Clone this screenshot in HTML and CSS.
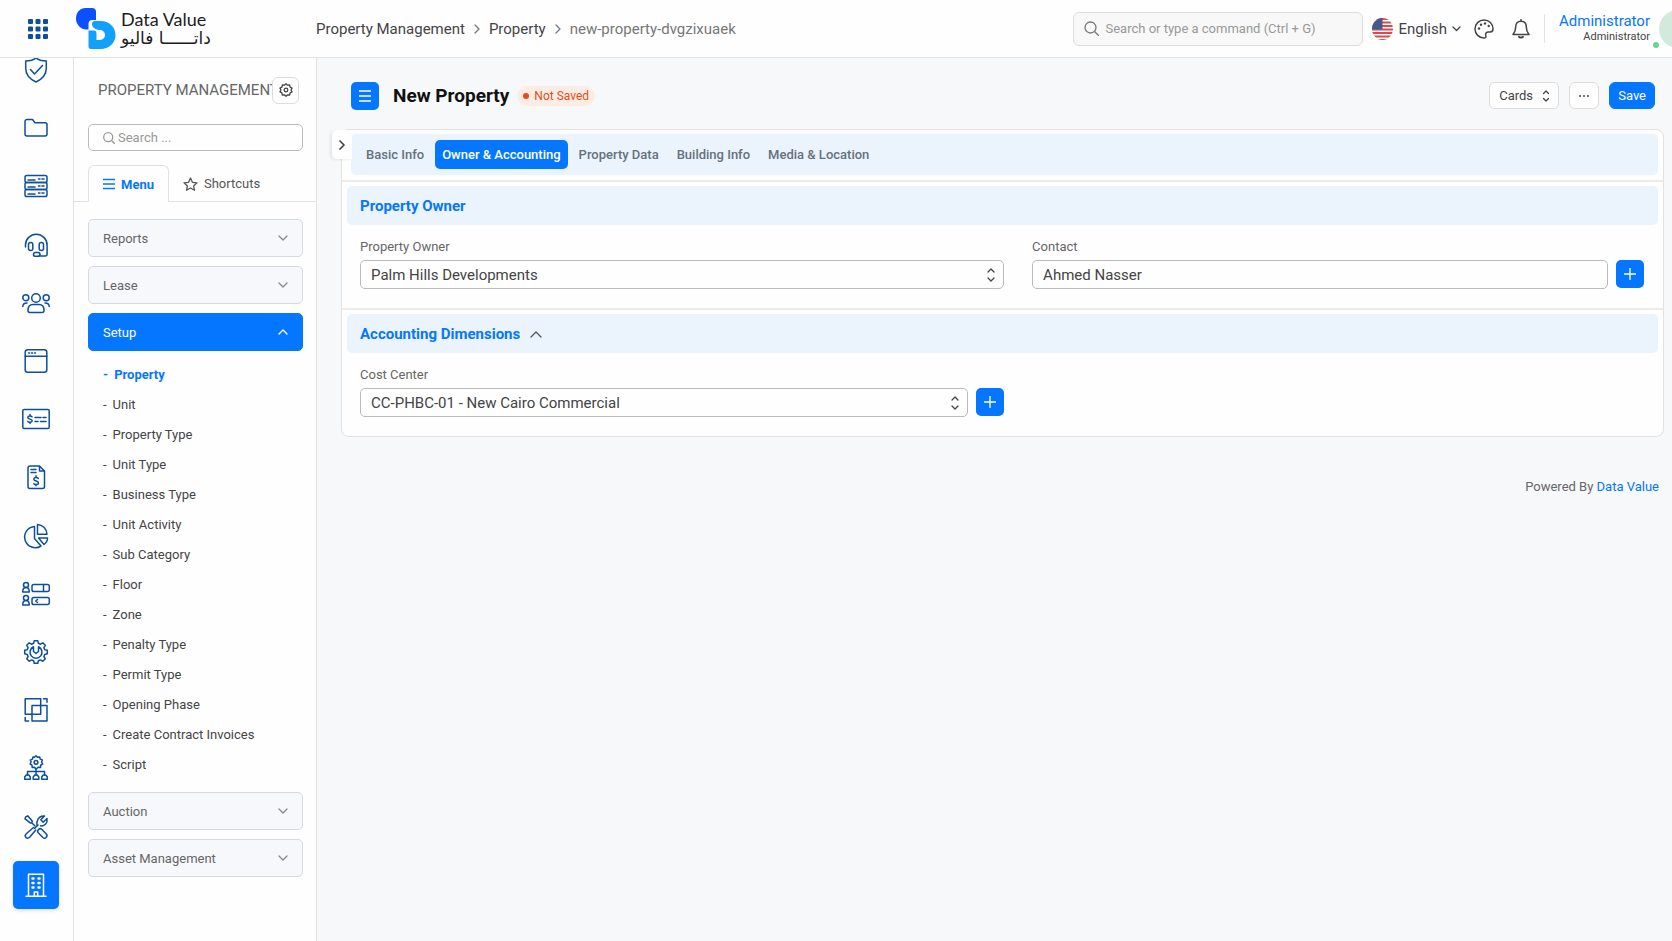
FILE: index.html
```html
<!DOCTYPE html>
<html lang="en">
<head>
  <meta charset="UTF-8" />
  <meta name="viewport" content="width=device-width, initial-scale=1" />
  <title>New Property</title>
  <link rel="stylesheet" href="styles.css">
</head>
<body>
  <header class="topbar">
    <button class="apps-btn" aria-label="Apps">
      <svg width="20" height="20" viewBox="0 0 20 20">
        <rect width="5" height="5" rx="1"/><rect x="7.5" width="5" height="5" rx="1"/><rect x="15" width="5" height="5" rx="1"/>
        <rect y="7.5" width="5" height="5" rx="1"/><rect x="7.5" y="7.5" width="5" height="5" rx="1"/><rect x="15" y="7.5" width="5" height="5" rx="1"/>
        <rect y="15" width="5" height="5" rx="1"/><rect x="7.5" y="15" width="5" height="5" rx="1"/><rect x="15" y="15" width="5" height="5" rx="1"/>
      </svg>
    </button>

    <a class="brand" href="#" aria-label="Data Value">
      <svg width="40" height="42" viewBox="0 0 40 42">
        <path d="M9.500 0H16a4 4 0 0 1 4 4v8h-3.500a4 4 0 0 0-4 4v5.500H10.500C4.500 21.500 0 16.500 0 10.500 0 4.500 4 0 9.500 0z" fill="#0b50ff"/>
        <path d="M21.500 13h3C33 13 39.500 19 39.500 27s-6.500 14-15 14H15a2.500 2.500 0 0 1-2.500-2.500V22.500h5a3 3 0 0 1 3 3V32H24a5 5 0 0 0 0-10c-4 0-8-2.500-8-6a3 3 0 0 1 3-3z" fill="#12a0fb"/>
      </svg>
      <span class="brand-text">
        <span class="brand-en">Data Value</span>
        <span class="brand-ar" lang="ar" dir="rtl">داتــــــا فاليو</span>
      </span>
    </a>

    <nav class="breadcrumb" aria-label="Breadcrumb">
      <a href="#">Property Management</a>
      <svg width="6" height="10" viewBox="0 0 6 10"><path d="M1 1l4 4-4 4"/></svg>
      <a href="#">Property</a>
      <svg width="6" height="10" viewBox="0 0 6 10"><path d="M1 1l4 4-4 4"/></svg>
      <span>new-property-dvgzixuaek</span>
    </nav>

    <div class="topbar-right">
      <label class="global-search">
        <svg width="15" height="15" viewBox="0 0 15 15"><circle cx="6.500" cy="6.500" r="5.500"/><path d="M10.500 10.500l4 4"/></svg>
        <input type="text" aria-label="Search" placeholder="Search or type a command (Ctrl + G)">
      </label>

      <button class="lang-btn">
        <svg class="flag" width="21" height="22" viewBox="0 0 21 22">
          <defs><clipPath id="flagClip"><ellipse cx="10.500" cy="11" rx="10.500" ry="11"/></clipPath></defs>
          <g clip-path="url(#flagClip)">
            <rect width="21" height="22" fill="#fff"/>
            <path class="stripes" d="M0 1h21M0 4.500h21M0 8h21M0 11.500h21M0 15h21M0 18.500h21M0 22h21"/>
            <rect width="10.500" height="11.500" fill="#45598b"/>
          </g>
        </svg>
        English
        <svg class="caret" width="9" height="6" viewBox="0 0 9 6"><path d="M1 1l3.500 3.500L8 1"/></svg>
      </button>

      <button class="icon-btn" aria-label="Theme">
        <svg width="20" height="20" viewBox="0 0 20 20">
          <path d="M10 1a9 9 0 0 0 0 18c1.600 0 2.200-1 1.800-2.300-.6-2.200.4-3.700 2.600-3.700h1.800c1.800 0 2.800-1.300 2.800-3.200C19 4.800 15 1 10 1z"/>
          <g class="dots"><circle cx="5" cy="9.500" r="1.200"/><circle cx="7" cy="5.800" r="1.200"/><circle cx="11" cy="4.500" r="1.200"/><circle cx="14.700" cy="7" r="1.200"/></g>
        </svg>
      </button>
      <button class="icon-btn" aria-label="Notifications">
        <svg width="18" height="20" viewBox="0 0 18 20">
          <path d="M9 2.200c-3.400 0-5.300 2.500-5.300 5.800 0 4-1.200 5.600-2.700 7.500h16c-1.500-1.900-2.700-3.500-2.700-7.500 0-3.300-1.900-5.800-5.300-5.800zM9 2.200V.6"/>
          <path d="M7 17.800c.5 1 3.500 1 4 0" stroke-width="2"/>
        </svg>
      </button>

      <div class="user">
        <div class="user-text">
          <a href="#">Administrator</a>
          <span>Administrator</span>
        </div>
        <div class="avatar"><span class="status"></span></div>
      </div>
    </div>
  </header>

  <div class="layout">
    <nav class="rail" aria-label="Modules">
      <div class="rail-list">
        <a href="#" aria-label="Security">
          <svg width="28" height="28" viewBox="0 0 28 28"><path d="M14 2C11 4.500 7 5 3.700 5v7c0 6.500 4.500 11.300 10.300 14 5.800-2.700 10.300-7.500 10.300-14V5C21 5 17 4.500 14 2z"/><path d="M8.500 13.500l4 4.500 8-8.500"/></svg>
        </a>
        <a href="#" aria-label="Projects">
          <svg width="28" height="28" viewBox="0 0 28 28"><path d="M3 7.500a2 2 0 0 1 2-2h5.500l2.500 3.200h10a2 2 0 0 1 2 2V20a2 2 0 0 1-2 2H5a2 2 0 0 1-2-2z"/></svg>
        </a>
        <a href="#" aria-label="Stock">
          <svg width="28" height="28" viewBox="0 0 28 28"><rect x="3" y="3.500" width="22" height="7" rx="1.800"/><rect x="3" y="10.500" width="22" height="7" rx="1.800"/><rect x="3" y="17.500" width="22" height="7" rx="1.800"/><path d="M6 8h7M6 15h7M6 22h7M16.500 7h1.500M20 7h2M16.500 14h1.500M20 14h2M16.500 21h1.500M20 21h2"/></svg>
        </a>
        <a href="#" aria-label="Support">
          <svg width="28" height="28" viewBox="0 0 28 28"><path d="M3.500 16v-2a10.800 10.800 0 0 1 21.600 0v9a2 2 0 0 1-2 2h-5"/><rect x="6.500" y="11.500" width="4.300" height="8" rx="2"/><rect x="17.200" y="11.500" width="4.300" height="8" rx="2"/><rect x="11.500" y="21.500" width="6.500" height="3.800" rx="1.900"/></svg>
        </a>
        <a href="#" aria-label="Customers">
          <svg width="28" height="28" viewBox="0 0 28 28"><circle cx="14" cy="9" r="4.300"/><circle cx="3.800" cy="8.700" r="3"/><circle cx="24.200" cy="8.700" r="3"/><path d="M6 21.500c0-4 2-6 5-6h6c3 0 5 2 5 6 0 1.300-.8 2-2 2H8c-1.200 0-2-.7-2-2zM.8 17.500c0-2 1.500-3.500 4.200-3.500M27.200 17.500c0-2-1.500-3.500-4.200-3.500"/></svg>
        </a>
        <a href="#" aria-label="Website">
          <svg width="28" height="28" viewBox="0 0 28 28"><rect x="3.200" y="2.700" width="21.600" height="22.600" rx="2.500"/><path d="M3.200 9.300h21.600M6.500 6h1M9.500 6h1M12.500 6h1"/></svg>
        </a>
        <a href="#" aria-label="Payments">
          <svg width="28" height="28" viewBox="0 0 28 28"><rect x=".8" y="4.500" width="26.400" height="19" rx="1.500"/><path d="M10 11.800c-.8-1.300-4.200-1.200-4.200.6 0 2.100 4.400 1.300 4.400 3.400 0 1.900-3.600 2-4.400.6M8 9.500v1.500M8 17v1.500M13 12.500h6M21 12.500h3M13 16.500h3M18.500 16.500h5.500"/></svg>
        </a>
        <a href="#" aria-label="Invoices">
          <svg width="28" height="28" viewBox="0 0 28 28"><path d="M6 5a2 2 0 0 1 2-2h9.500l5 5v15.500a2 2 0 0 1-2 2H8a2 2 0 0 1-2-2zM17.500 3v5h5M9 6.500h5M9 9.500h5"/><path d="M16.300 15.500c-.8-1.500-4.500-1.400-4.500.7 0 2.300 4.700 1.400 4.700 3.700 0 2-3.900 2.200-4.700.7M14 12.800v1.500M14 21.200v1.500"/></svg>
        </a>
        <a href="#" aria-label="Analytics">
          <svg width="28" height="28" viewBox="0 0 28 28"><path d="M12.500 4.500A10.600 10.600 0 1 0 19 24l-6.500-7.500z"/><path d="M15.500 2.500v9.700h9.500a10 10 0 0 0-9.500-9.700zM16.500 16h9c0 2.500-1.500 5-3.500 6.500z"/></svg>
        </a>
        <a href="#" aria-label="Staff">
          <svg width="28" height="28" viewBox="0 0 28 28"><circle cx="4" cy="5" r="2.500"/><path d="M.7 12c0-3 1-4.500 3.300-4.500S7.300 9 7.300 12z"/><rect x="10" y="4.500" width="17.300" height="7" rx="1.800"/><path d="M21.500 4.500v7"/><circle cx="4" cy="18" r="2.500"/><path d="M.7 25c0-3 1-4.500 3.300-4.500S7.300 22 7.300 25z"/><rect x="10" y="17.500" width="17.300" height="7" rx="1.800"/><path d="M15.500 19.500L13.800 21l1.700 1.500"/></svg>
        </a>
        <a href="#" aria-label="Maintenance">
          <svg width="28" height="28" viewBox="0 0 28 28"><path d="M11.600 5.300l.6-2.600h3.600l.6 2.600 2.100.9 2.300-1.400 2.500 2.500-1.400 2.300.9 2.100 2.500.5v3.600l-2.500.6-.9 2.100 1.400 2.300-2.500 2.500-2.300-1.400-2.100.9-.6 2.500h-3.600l-.6-2.500-2.100-.9-2.300 1.400-2.500-2.500 1.400-2.300-.9-2.100-2.500-.6v-3.600l2.500-.5.9-2.100-1.400-2.300 2.500-2.500 2.300 1.400z"/><path d="M11.500 8.700a6 6 0 1 0 5 0v4.800L14 15.500l-2.500-2z"/></svg>
        </a>
        <a href="#" aria-label="Integrations">
          <svg width="28" height="28" viewBox="0 0 28 28"><rect x="3.200" y="2.800" width="15.500" height="15.500"/><rect x="10" y="9.500" width="15" height="15.500"/><path d="M21.500 2.800h3.500v3.500M3.200 21.500V25h3.500"/></svg>
        </a>
        <a href="#" aria-label="Organization">
          <svg width="28" height="28" viewBox="0 0 28 28"><path d="M12.500 3.300L14 1.700l1.500 1.600 2.200-.4.500 2.200 2.100.8-.7 2.100 1 2-1.900 1.200-.2 2.200-2.300-.1L14 15l-1.500-1.700-2.300.1-.2-2.200-1.900-1.200 1-2-.7-2.100 2.100-.8.500-2.200z"/><circle cx="14" cy="8.300" r="1.900"/><path d="M14 15v6M5.500 21v-3.500h17V21"/><path d="M2.700 25.300v-2.300L4.200 21h2.600l1.500 2v2.300zM11.200 25.300v-2.300l1.500-2h2.600l1.500 2v2.300zM19.700 25.300v-2.300l1.500-2h2.600l1.500 2v2.300z"/></svg>
        </a>
        <a href="#" aria-label="Tools">
          <svg width="28" height="28" viewBox="0 0 28 28"><path d="M3.500 4.200l2.200-1.400 4.500 5.200-.3 1.700-1.700.2L3 5.800zM10 10l3 3"/><path d="M16.500 16.500c1-1 2.300-1 3.200-.2l4.600 4.800c2 2.300-1.200 5.400-3.400 3.400l-4.700-4.800c-.8-1-.7-2.200.3-3.200z"/><path d="M15 13c-.9-4.800 1.300-10.600 7.500-10l-3.700 3.800 2.400 2.400L25 5.500c.8 4.500-2.300 8-6.500 7.300M12.500 15.500L16 12M11.500 14.500l-7.200 6.200c-2.700 2.400.6 6.300 3.300 3.600L13.800 17"/></svg>
        </a>
        <a class="active" href="#" aria-label="Property Management">
          <svg width="28" height="28" viewBox="0 0 28 28"><path d="M6.500 25V3.200h15V25M4 25.200h20M12.300 25v-4h3.400v4"/><path d="M10.500 7.500h1M16.500 7.500h1M10.500 12h1M16.500 12h1M10.500 16.500h1M16.500 16.500h1" stroke-width="2.500"/></svg>
        </a>
      </div>
    </nav>

    <aside class="sidebar">
      <div class="sidebar-head">
        <h2>PROPERTY MANAGEMENT</h2>
        <button class="gear-btn" aria-label="Settings">
          <svg width="14" height="14" viewBox="0 0 14 14"><path d="M5.400 2.200L7 .8l1.600 1.400 2.100-.2.400 2.100 1.900 1-.9 1.900.9 1.900-1.900 1-.4 2.100-2.100-.2L7 13.200l-1.600-1.400-2.100.2-.4-2.100-1.900-1L1.900 7 1 5.100l1.900-1L3.300 2z"/><circle cx="7" cy="7" r="1.800"/></svg>
        </button>
      </div>

      <label class="side-search">
        <svg width="12" height="12" viewBox="0 0 12 12"><circle cx="5.200" cy="5.200" r="4.500"/><path d="M8.500 8.500l3 3"/></svg>
        <input type="text" aria-label="Search menu" placeholder="Search ...">
      </label>

      <div class="side-tabs">
        <button class="side-tab active">
          <svg width="12" height="12" viewBox="0 0 12 12"><path d="M0 1.500h12M0 6h12M0 10.500h12"/></svg>
          Menu
        </button>
        <button class="side-tab">
          <svg width="15" height="14" viewBox="0 0 15 14"><path d="M7.500 1l1.900 4.300 4.600.5-3.400 3.100.9 4.400-4-2.300-4 2.300.9-4.400L1 5.800l4.600-.5z"/></svg>
          Shortcuts
        </button>
      </div>

      <div class="menu">
        <button class="group">Reports <svg width="10" height="6" viewBox="0 0 10 6"><path d="M1 1l4 4 4-4"/></svg></button>
        <button class="group">Lease <svg width="10" height="6" viewBox="0 0 10 6"><path d="M1 1l4 4 4-4"/></svg></button>
        <button class="group open" aria-expanded="true">Setup <svg width="10" height="6" viewBox="0 0 10 6"><path d="M1 5l4-4 4 4"/></svg></button>
        <ul class="submenu">
          <li><a class="current" href="#">Property</a></li>
          <li><a href="#">Unit</a></li>
          <li><a href="#">Property Type</a></li>
          <li><a href="#">Unit Type</a></li>
          <li><a href="#">Business Type</a></li>
          <li><a href="#">Unit Activity</a></li>
          <li><a href="#">Sub Category</a></li>
          <li><a href="#">Floor</a></li>
          <li><a href="#">Zone</a></li>
          <li><a href="#">Penalty Type</a></li>
          <li><a href="#">Permit Type</a></li>
          <li><a href="#">Opening Phase</a></li>
          <li><a href="#">Create Contract Invoices</a></li>
          <li><a href="#">Script</a></li>
        </ul>
        <button class="group">Auction <svg width="10" height="6" viewBox="0 0 10 6"><path d="M1 1l4 4 4-4"/></svg></button>
        <button class="group">Asset Management <svg width="10" height="6" viewBox="0 0 10 6"><path d="M1 1l4 4 4-4"/></svg></button>
      </div>
    </aside>

    <main class="content">
      <div class="page-head">
        <button class="menu-btn" aria-label="Toggle menu">
          <svg width="12" height="12" viewBox="0 0 12 12"><path d="M0 1h12M0 6h12M0 11h12"/></svg>
        </button>
        <h1>New Property</h1>
        <span class="pill">Not Saved</span>
        <div class="page-actions">
          <div class="select-wrap view-select">
            <select aria-label="View">
              <option>Cards</option>
            </select>
            <svg width="8" height="12" viewBox="0 0 8 12"><path d="M1.500 3.500L4 1l2.500 2.500M1.500 8.500L4 11l2.500-2.500"/></svg>
          </div>
          <button class="btn more-btn" aria-label="More">
            <svg width="10" height="2" viewBox="0 0 10 2"><circle cx="1" cy="1" r="1"/><circle cx="5" cy="1" r="1"/><circle cx="9" cy="1" r="1"/></svg>
          </button>
          <button class="btn save-btn">Save</button>
        </div>
      </div>

      <div class="card">
        <button class="expand-btn" aria-label="Expand">
          <svg width="6" height="10" viewBox="0 0 6 10"><path d="M1 1l4 4-4 4"/></svg>
        </button>

        <div class="tabs-row">
          <div class="tabs">
            <button class="tab">Basic Info</button>
            <button class="tab active">Owner &amp; Accounting</button>
            <button class="tab">Property Data</button>
            <button class="tab">Building Info</button>
            <button class="tab">Media &amp; Location</button>
          </div>
        </div>

        <section class="section">
          <h3 class="section-head">Property Owner</h3>
          <div class="fields">
            <div class="field">
              <label for="propertyOwner">Property Owner</label>
              <div class="field-row">
                <div class="select-wrap">
                  <select id="propertyOwner">
                    <option>Palm Hills Developments</option>
                  </select>
                  <svg width="8" height="14" viewBox="0 0 8 14"><path d="M1 4l3-3 3 3M1 10l3 3 3-3"/></svg>
                </div>
              </div>
            </div>
            <div class="field">
              <label for="contact">Contact</label>
              <div class="field-row">
                <input type="text" id="contact" value="Ahmed Nasser">
                <button class="add-btn" aria-label="Add contact">
                  <svg width="12" height="12" viewBox="0 0 12 12"><path d="M6 .5v11M.5 6h11"/></svg>
                </button>
              </div>
            </div>
          </div>
        </section>

        <section class="section">
          <h3 class="section-head">Accounting Dimensions
            <svg width="12" height="8" viewBox="0 0 12 8"><path d="M1 7l5-5 5 5"/></svg>
          </h3>
          <div class="fields">
            <div class="field">
              <label for="costCenter">Cost Center</label>
              <div class="field-row">
                <div class="select-wrap">
                  <select id="costCenter">
                    <option>CC-PHBC-01 - New Cairo Commercial</option>
                  </select>
                  <svg width="8" height="14" viewBox="0 0 8 14"><path d="M1 4l3-3 3 3M1 10l3 3 3-3"/></svg>
                </div>
                <button class="add-btn" aria-label="Add cost center">
                  <svg width="12" height="12" viewBox="0 0 12 12"><path d="M6 .5v11M.5 6h11"/></svg>
                </button>
              </div>
            </div>
          </div>
        </section>
      </div>

      <footer class="footer">Powered By <a href="#">Data Value</a></footer>
    </main>
  </div>
</body>
</html>
```

FILE: styles.css
```css
* {
  box-sizing: border-box;
  margin: 0;
  padding: 0;
}

:root {
  --blue: #0576ff;
  --navy: #0d4f9b;
  --line: #e2e2e4;
  --tint: #ebf4fd;
}

body {
  font-family: Roboto, sans-serif;
  font-size: 13px;
  color: #444;
  background: #f7f8f9;
  height: 100vh;
  display: flex;
  flex-direction: column;
  overflow: hidden;
}

a {
  color: inherit;
  text-decoration: none;
}

button,
input,
select {
  font: inherit;
  color: inherit;
}

button {
  border: none;
  background: none;
  cursor: pointer;
}

svg {
  display: block;
  flex-shrink: 0;
  fill: none;
  stroke: currentColor;
  stroke-width: 1.3;
  stroke-linecap: round;
  stroke-linejoin: round;
}

/* Top bar */
.topbar {
  display: flex;
  align-items: center;
  height: 58px;
  flex-shrink: 0;
  background: #fefefe;
  border-bottom: 1px solid var(--line);
  overflow: hidden;
}

.apps-btn {
  margin-left: 28px;
}

.apps-btn svg,
.brand svg,
.flag {
  stroke: none;
}

.apps-btn svg {
  fill: var(--navy);
}

.brand {
  display: flex;
  align-items: center;
  gap: 5px;
  width: 240px;
  margin-left: 28px;
}

.brand-text {
  display: flex;
  flex-direction: column;
  color: #1c1c1e;
}

.brand-en {
  font-family: Lato, sans-serif;
  font-size: 18px;
  line-height: 18px;
}

.brand-ar {
  font-family: "DejaVu Sans", sans-serif;
  font-size: 17px;
  line-height: 20px;
  text-align: left;
}

.breadcrumb {
  display: flex;
  align-items: center;
  gap: 9px;
  font-size: 15px;
  white-space: nowrap;
}

.breadcrumb span {
  color: #777;
}

.breadcrumb svg {
  color: #777;
}

.topbar-right {
  display: flex;
  align-items: center;
  margin-left: auto;
}

.global-search {
  display: flex;
  align-items: center;
  gap: 6px;
  width: 290px;
  height: 34px;
  padding: 0 10px;
  background: #f8f8f8;
  border: 1px solid #dcdcde;
  border-radius: 6px;
  color: #777;
}

.global-search input,
.side-search input {
  flex: 1;
  min-width: 0;
  border: none;
  outline: none;
  background: none;
}

::placeholder {
  color: #999;
  opacity: 1;
}

.lang-btn {
  display: flex;
  align-items: center;
  gap: 5px;
  margin-left: 9px;
  font-size: 15px;
}

.flag .stripes {
  stroke: #dc4a50;
  stroke-width: 1.8;
}

.icon-btn {
  margin-left: 13px;
}

.icon-btn svg {
  stroke-width: 1.5;
}

.icon-btn + .icon-btn {
  margin-left: 18px;
}

.dots {
  fill: currentColor;
  stroke: none;
}

.user {
  display: flex;
  align-items: center;
  gap: 9px;
  height: 29px;
  margin-left: 14px;
  padding-left: 14px;
  border-left: 1px solid var(--line);
}

.user-text {
  display: flex;
  flex-direction: column;
  text-align: right;
  font-size: 11px;
  line-height: 16px;
}

.user-text a {
  font-size: 15px;
  color: var(--blue);
}

.avatar {
  position: relative;
  width: 38px;
  height: 38px;
  margin-right: -25px;
  border-radius: 50%;
  background: #d2eadb;
}

.status {
  position: absolute;
  left: -6px;
  bottom: 0;
  width: 6px;
  height: 6px;
  border-radius: 50%;
  background: #66d694;
}

.layout {
  display: flex;
  flex: 1;
  min-height: 0;
}

/* Module rail, scrolled a little past its first icon */
.rail {
  width: 74px;
  flex-shrink: 0;
  display: flex;
  background: #fefefe;
  border-right: 1px solid var(--line);
  overflow: hidden;
}

.rail-list {
  flex: 1;
  display: flex;
  flex-direction: column;
  align-items: center;
  justify-content: space-between;
  margin-top: -12px;
  padding: 0 1px 32px 0;
}

.rail a {
  display: grid;
  place-items: center;
  width: 46px;
  height: 48px;
  border-radius: 5px;
  color: var(--navy);
}

.rail svg {
  stroke-width: 1.5;
}

.rail a.active {
  background: var(--blue);
  color: #fff;
  box-shadow: 0 1px 4px rgba(0, 0, 0, 0.15);
}

/* Sidebar */
.sidebar {
  width: 243px;
  flex-shrink: 0;
  background: #fefefe;
  border-right: 1px solid var(--line);
}

.sidebar-head {
  display: flex;
  align-items: center;
  height: 26px;
  margin: 19px 17px 0 24px;
}

.sidebar-head h2 {
  flex: 1;
  font-size: 15px;
  font-weight: 400;
  color: #666;
  white-space: nowrap;
  overflow: hidden;
}

.gear-btn {
  display: grid;
  place-items: center;
  width: 27px;
  height: 27px;
  border: 1px solid #dcdcde;
  border-radius: 6px;
}

.side-search {
  display: flex;
  align-items: center;
  gap: 3px;
  height: 27px;
  margin: 21px 13px 0 14px;
  padding: 0 14px;
  border: 1px solid #bbb;
  border-radius: 5px;
  color: #999;
}

.side-tabs {
  display: flex;
  height: 37px;
  margin-top: 14px;
  padding-left: 14px;
  border-bottom: 1px solid var(--line);
}

.side-tab {
  display: flex;
  align-items: center;
  gap: 6px;
  height: 37px;
  padding: 0 14px;
  color: #555;
}

.side-tab.active {
  background: #fefefe;
  border: 1px solid var(--line);
  border-bottom: none;
  border-radius: 6px 6px 0 0;
  font-weight: 700;
  color: var(--blue);
}

.side-tab.active svg {
  stroke-width: 1.7;
}

.menu {
  display: flex;
  flex-direction: column;
  gap: 9px;
  padding: 17px 13px 0 14px;
}

.group {
  display: flex;
  align-items: center;
  justify-content: space-between;
  height: 38px;
  padding: 0 14px;
  background: #f7f8fc;
  border: 1px solid #d6d9e2;
  border-radius: 5px;
  color: #666;
}

.group svg {
  color: #888;
}

.group.open,
.group.open svg {
  background: var(--blue);
  border-color: var(--blue);
  color: #fff;
}

.submenu {
  list-style: none;
  padding-bottom: 3px;
}

.submenu a {
  display: flex;
  gap: 6px;
  padding-left: 15px;
  line-height: 30px;
}

.submenu a::before {
  content: "-";
}

.submenu .current {
  font-weight: 700;
  color: var(--blue);
}

/* Page */
.content {
  flex: 1;
  min-width: 0;
  padding: 22px 8px 0 24px;
}

.page-head {
  display: flex;
  align-items: center;
  height: 31px;
  padding: 0 9px 0 10px;
}

.menu-btn,
.add-btn {
  display: grid;
  place-items: center;
  width: 28px;
  height: 28px;
  flex-shrink: 0;
  background: var(--blue);
  border-radius: 5px;
  color: #fff;
}

.page-head h1 {
  margin-left: 14px;
  font-size: 19px;
  font-weight: 700;
  color: #111;
}

.pill {
  display: flex;
  align-items: center;
  gap: 5px;
  height: 20px;
  margin-left: 8px;
  padding: 0 6px;
  border-radius: 10px;
  background: #fdece4;
  color: #de4f1b;
  font-size: 12px;
}

.pill::before {
  content: "";
  width: 6px;
  height: 6px;
  border-radius: 50%;
  background: currentColor;
}

.page-actions {
  display: flex;
  gap: 10px;
  margin-left: auto;
}

.btn {
  height: 27px;
  padding: 0 8px;
  border: 1px solid #dcdcde;
  border-radius: 6px;
  background: #fefefe;
}

.more-btn {
  display: grid;
  place-items: center;
  width: 30px;
}

.more-btn svg {
  fill: currentColor;
  stroke: none;
}

.save-btn {
  background: var(--blue);
  border-color: var(--blue);
  color: #fff;
}

.select-wrap {
  position: relative;
  flex: 1;
}

.select-wrap svg {
  position: absolute;
  right: 9px;
  top: 0;
  bottom: 0;
  margin: auto;
  pointer-events: none;
}

select,
.field input {
  appearance: none;
  width: 100%;
  height: 29px;
  padding: 0 10px;
  background: #fefefe;
  border: 1px solid #bbb;
  border-radius: 5px;
  outline: none;
}

.view-select select {
  width: 70px;
  height: 27px;
  padding: 0 9px;
  border-color: #dcdcde;
}

.card {
  position: relative;
  margin-top: 18px;
  background: #fefefe;
  border: 1px solid var(--line);
  border-radius: 8px;
}

.expand-btn {
  position: absolute;
  left: -10px;
  top: 0;
  display: grid;
  place-items: center;
  width: 20px;
  height: 29px;
  border-radius: 5px 0 0 5px;
  background: #fefefe;
  box-shadow: -2px 1px 3px rgba(0, 0, 0, 0.08);
}

.expand-btn svg {
  stroke-width: 1.7;
}

.tabs-row {
  padding: 4px 5px 5px 9px;
}

.tabs {
  display: flex;
  align-items: center;
  gap: 4px;
  height: 41px;
  padding: 0 8px;
  border-radius: 5px;
  background: var(--tint);
}

.tab {
  height: 29px;
  padding: 0 7px;
  border-radius: 5px;
  font-weight: 500;
  color: #66707c;
}

.tab.active {
  background: var(--blue);
  color: #fff;
}

.section {
  padding: 4px 5px 19px;
  border-top: 2px solid #ebebed;
}

.section-head {
  display: flex;
  align-items: center;
  gap: 10px;
  height: 39px;
  padding: 0 13px;
  border-radius: 5px;
  background: var(--tint);
  font-size: 15px;
  font-weight: 700;
  color: var(--blue);
}

.section-head svg {
  color: #555;
}

.fields {
  display: grid;
  grid-template-columns: 20fr 19fr;
  gap: 28px;
  padding: 13px 14px 0 13px;
}

.field label {
  display: block;
  margin-bottom: 4px;
  line-height: 18px;
  color: #666;
}

.field-row {
  display: flex;
  gap: 8px;
}

.field input,
.field select {
  font-size: 15px;
}

.footer {
  margin-top: 42px;
  padding-right: 5px;
  text-align: right;
  color: #666;
}

.footer a {
  color: var(--blue);
}
```
